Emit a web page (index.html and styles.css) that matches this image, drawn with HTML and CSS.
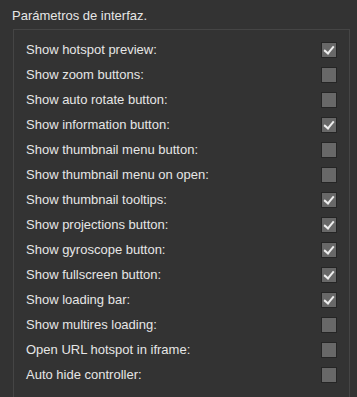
FILE: index.html
```html
<!DOCTYPE html>
<html lang="es">
<head>
  <meta charset="UTF-8" />
  <title>Parámetros de interfaz</title>
  <link rel="stylesheet" href="styles.css">
</head>
<body>
  <div class="title">Parámetros de interfaz.</div>
  <div class="group">
    <div class="row"><span>Show hotspot preview:</span><span class="check on"></span></div>
    <div class="row"><span>Show zoom buttons:</span><span class="check"></span></div>
    <div class="row"><span>Show auto rotate button:</span><span class="check"></span></div>
    <div class="row"><span>Show information button:</span><span class="check on"></span></div>
    <div class="row"><span>Show thumbnail menu button:</span><span class="check"></span></div>
    <div class="row"><span>Show thumbnail menu on open:</span><span class="check"></span></div>
    <div class="row"><span>Show thumbnail tooltips:</span><span class="check on"></span></div>
    <div class="row"><span>Show projections button:</span><span class="check on"></span></div>
    <div class="row"><span>Show gyroscope button:</span><span class="check on"></span></div>
    <div class="row"><span>Show fullscreen button:</span><span class="check on"></span></div>
    <div class="row"><span>Show loading bar:</span><span class="check on"></span></div>
    <div class="row"><span>Show multires loading:</span><span class="check"></span></div>
    <div class="row"><span>Open URL hotspot in iframe:</span><span class="check"></span></div>
    <div class="row"><span>Auto hide controller:</span><span class="check"></span></div>
  </div>
</body>
</html>
```

FILE: styles.css
```css
body {
  margin: 0;
  background: #333333;
  color: #e6e6e6;
  font-family: "Liberation Sans", Arial, sans-serif;
  font-size: 13px;
  overflow: hidden;
}

.title {
  padding: 8px 0 0 12px;
  height: 21px;
}

.group {
  margin: 0 7px 0 13px;
  border: 1px solid #454545;
  border-bottom: none;
  padding: 7px 12px 20px 12px;
}

.row {
  display: flex;
  align-items: center;
  justify-content: space-between;
  height: 25px;
}

.check {
  width: 14px;
  height: 14px;
  background: #686868;
  border: 1px solid #252525;
  position: relative;
}

.check.on::after {
  content: "";
  position: absolute;
  left: 4px;
  top: 1px;
  width: 4px;
  height: 8px;
  border: solid #eeeeee;
  border-width: 0 2px 2px 0;
  transform: rotate(40deg);
}
```
